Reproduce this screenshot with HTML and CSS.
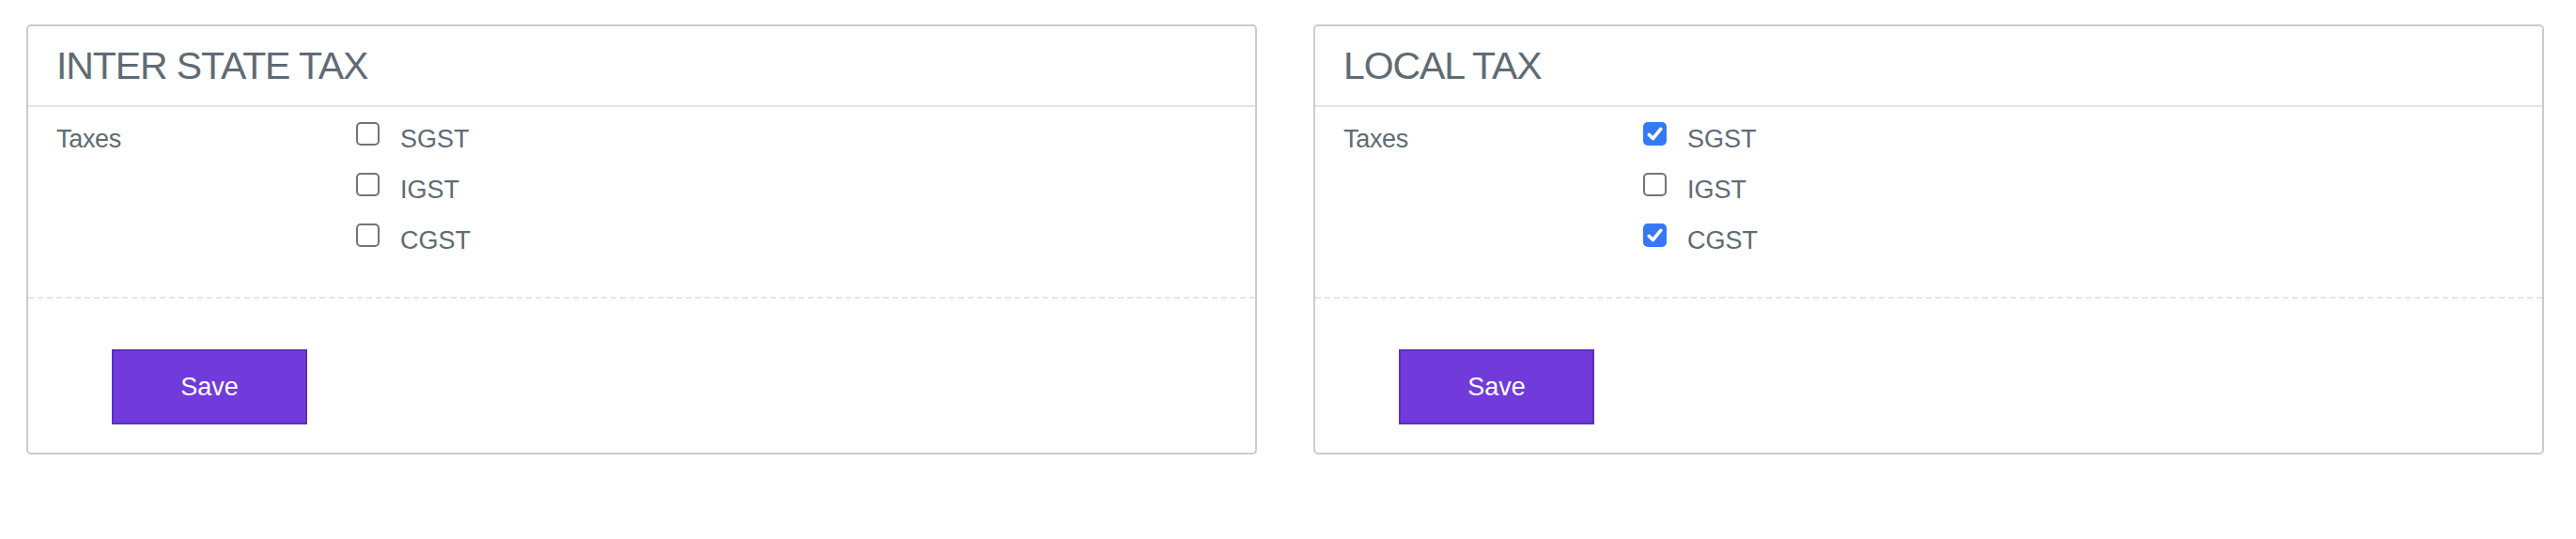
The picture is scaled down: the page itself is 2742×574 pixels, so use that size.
FILE: index.html
```html
<!DOCTYPE html>
<html lang="en">
<head>
<meta charset="utf-8">
<title>Tax settings</title>
<link rel="stylesheet" href="styles.css">
</head>
<body>
<div class="page">
  <section class="card">
    <header class="card-header"><h2 class="card-title">INTER STATE TAX</h2></header>
    <div class="card-body">
      <div class="field-label">Taxes</div>
      <div class="options">
        <label class="option"><span class="box"></span><span class="opt-text">SGST</span></label>
        <label class="option"><span class="box"></span><span class="opt-text">IGST</span></label>
        <label class="option"><span class="box"></span><span class="opt-text">CGST</span></label>
      </div>
    </div>
    <footer class="card-footer"><button class="btn-save" type="button">Save</button></footer>
  </section>
  <section class="card">
    <header class="card-header"><h2 class="card-title">LOCAL TAX</h2></header>
    <div class="card-body">
      <div class="field-label">Taxes</div>
      <div class="options">
        <label class="option"><span class="box checked"><svg viewBox="0 0 25 25" width="25" height="25"><path d="M6.3 13.4 L10.5 17.5 L18.8 7.4" fill="none" stroke="#fff" stroke-width="3.6" stroke-linecap="round" stroke-linejoin="round"/></svg></span><span class="opt-text">SGST</span></label>
        <label class="option"><span class="box"></span><span class="opt-text">IGST</span></label>
        <label class="option"><span class="box checked"><svg viewBox="0 0 25 25" width="25" height="25"><path d="M6.3 13.4 L10.5 17.5 L18.8 7.4" fill="none" stroke="#fff" stroke-width="3.6" stroke-linecap="round" stroke-linejoin="round"/></svg></span><span class="opt-text">CGST</span></label>
      </div>
    </div>
    <footer class="card-footer"><button class="btn-save" type="button">Save</button></footer>
  </section>
</div>
</body>
</html>
```
FILE: styles.css
```css
html, body {
  margin: 0;
  padding: 0;
  background: #ffffff;
}
body {
  font-family: "Liberation Sans", Arial, sans-serif;
  color: #5f6b75;
}
.page {
  display: flex;
  gap: 60px;
  padding: 26px 34px 0 28px;
}
.card {
  flex: 1 1 0;
  box-sizing: border-box;
  border: 2px solid #cbcbcb;
  border-radius: 5px;
  background: #fff;
}
.card-header {
  height: 84px;
  display: flex;
  align-items: center;
  padding: 0 30px;
  border-bottom: 2px solid #e4e4e4;
}
.card-title {
  margin: 0;
  font-weight: normal;
  font-size: 41px;
  letter-spacing: -1.1px;
  line-height: 1;
  color: #5f6b75;
}
.card-body {
  display: flex;
  padding: 16px 30px 47px;
  border-bottom: 2px dashed #e6e6e6;
}
.field-label {
  width: 319px;
  font-size: 27px;
  letter-spacing: -0.3px;
  line-height: 25px;
  padding-top: 6px;
}
.options {
  display: flex;
  flex-direction: column;
  gap: 23px;
}
.option {
  display: flex;
  align-items: flex-start;
}
.box {
  box-sizing: border-box;
  width: 25px;
  height: 25px;
  border: 2px solid #747474;
  border-radius: 5px;
  background: #fff;
  flex: none;
  display: block;
}
.box.checked {
  border: none;
  background: #3579f5;
}
.box svg {
  display: block;
}
.opt-text {
  margin-left: 22px;
  font-size: 27px;
  line-height: 25px;
  padding-top: 6px;
}
.card-footer {
  padding: 54px 30px 30px 89px;
}
.btn-save {
  display: block;
  box-sizing: border-box;
  width: 208px;
  height: 80px;
  margin: 0;
  border: 2px solid #5a2fbd;
  border-radius: 0;
  background: #713bdb;
  color: #ffffff;
  font-family: "Liberation Sans", Arial, sans-serif;
  font-size: 27px;
  padding: 0;
}
```
